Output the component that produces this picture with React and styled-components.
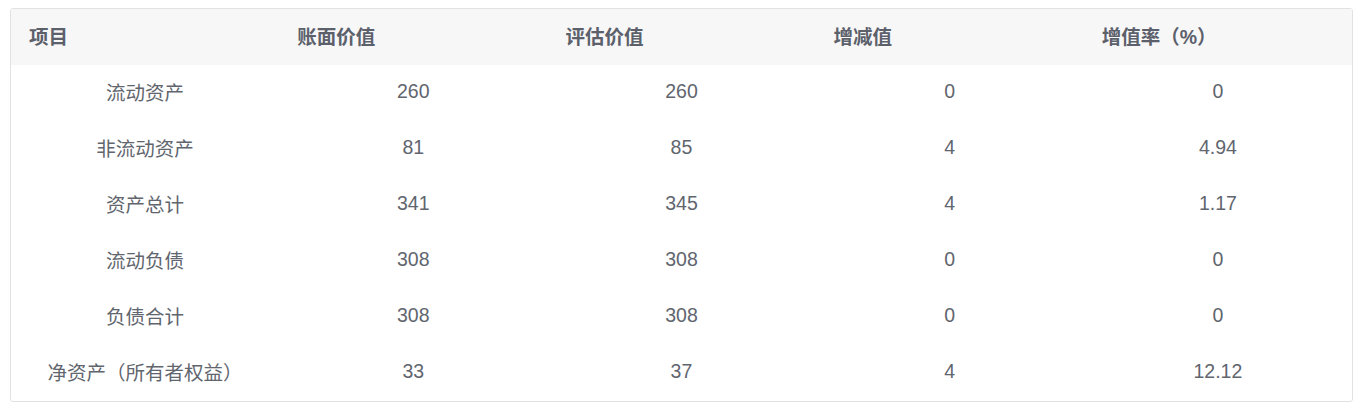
import styled, { createGlobalStyle } from 'styled-components';

const GlobalStyle = createGlobalStyle`
  body {
    margin: 0;
    background: #fff;
    font-family: "Liberation Sans", "Noto Sans CJK SC", sans-serif;
  }
`;

const Page = styled.div`
  padding: 8px 10px;
`;

const Frame = styled.div`
  border: 1px solid #e2e2e2;
  border-radius: 3px;
  overflow: hidden;
`;

const Table = styled.table`
  width: 100%;
  border-collapse: collapse;
  table-layout: fixed;
  font-size: 19.5px;
`;

const HeadRow = styled.tr`
  background: #f7f7f7;
`;

const HeadCell = styled.th`
  height: 56px;
  box-sizing: border-box;
  padding: 0 0 3px 18px;
  text-align: left;
  font-weight: bold;
  color: #5b606b;
`;

const Cell = styled.td`
  height: 56px;
  box-sizing: border-box;
  padding: 0 0 3px;
  text-align: center;
  color: #61656e;
`;

const columns = ['项目', '账面价值', '评估价值', '增减值', '增值率（%）'];

const rows = [
  ['流动资产', '260', '260', '0', '0'],
  ['非流动资产', '81', '85', '4', '4.94'],
  ['资产总计', '341', '345', '4', '1.17'],
  ['流动负债', '308', '308', '0', '0'],
  ['负债合计', '308', '308', '0', '0'],
  ['净资产（所有者权益）', '33', '37', '4', '12.12'],
];

export default function App() {
  return (
    <Page>
      <GlobalStyle />
      <Frame>
        <Table>
          <thead>
            <HeadRow>
              {columns.map((c) => (
                <HeadCell key={c}>{c}</HeadCell>
              ))}
            </HeadRow>
          </thead>
          <tbody>
            {rows.map((r) => (
              <tr key={r[0]}>
                {r.map((v, i) => (
                  <Cell key={i}>{v}</Cell>
                ))}
              </tr>
            ))}
          </tbody>
        </Table>
      </Frame>
    </Page>
  );
}
